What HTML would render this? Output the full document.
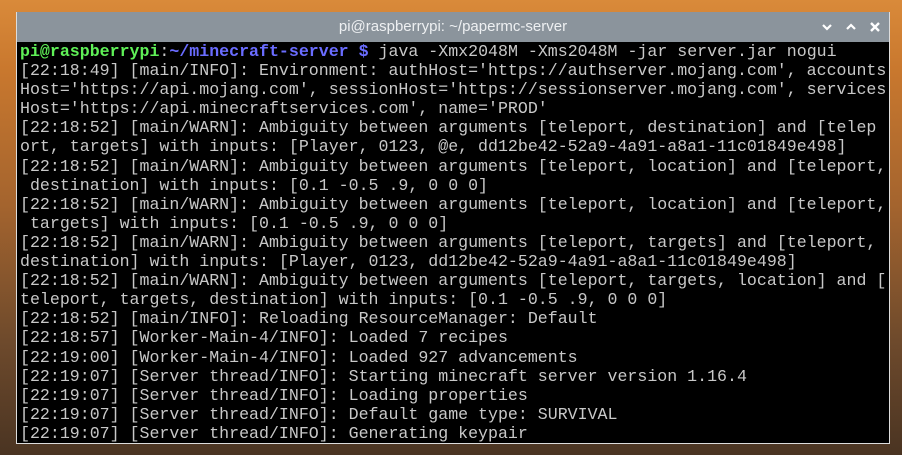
<!DOCTYPE html>
<html><head><meta charset="utf-8"><style>
html,body{margin:0;width:902px;height:455px;overflow:hidden}
body{background:linear-gradient(180deg,#d98a3a 0%,#c9782e 15%,#a4642e 45%,#6e4a2c 75%,#4a3422 100%);position:relative;font-family:"Liberation Sans",sans-serif}
.win{position:absolute;left:16px;top:12px;width:874px;height:432px;background:#000;border:1px solid #ddd;border-top:none;box-sizing:border-box}
.tb{position:absolute;left:0;top:0;width:100%;height:30px;background:#8b949c;color:#eef0f2;font-size:15px;text-align:center;line-height:30px}
.tb svg{position:absolute;top:9px}
pre{position:absolute;left:3px;top:30px;margin:0;font-family:"Liberation Mono",monospace;font-size:16.6px;line-height:19.1px;color:#c8c8c8;white-space:pre}
.g{color:#5ff057;font-weight:bold}.b{color:#6a6cff;font-weight:bold}
</style></head><body>
<div class="win">
<div class="tb">pi@raspberrypi: ~/papermc-server
<svg style="left:804px" width="12" height="12" viewBox="0 0 12 12"><path d="M2 4 L6 8 L10 4" stroke="#fff" stroke-width="2.2" fill="none"/></svg>
<svg style="left:828px" width="12" height="12" viewBox="0 0 12 12"><path d="M2 8 L6 4 L10 8" stroke="#fff" stroke-width="2.2" fill="none"/></svg>
<svg style="left:852px" width="12" height="12" viewBox="0 0 12 12"><path d="M2 2 L10 10 M10 2 L2 10" stroke="#fff" stroke-width="2.4" fill="none"/></svg></div>
<pre><span class="g">pi@raspberrypi</span>:<span class="b">~/minecraft-server $</span> java -Xmx2048M -Xms2048M -jar server.jar nogui
[22:18:49] [main/INFO]: Environment: authHost='https://authserver.mojang.com', accounts
Host='https://api.mojang.com', sessionHost='https://sessionserver.mojang.com', services
Host='https://api.minecraftservices.com', name='PROD'
[22:18:52] [main/WARN]: Ambiguity between arguments [teleport, destination] and [telep
ort, targets] with inputs: [Player, 0123, @e, dd12be42-52a9-4a91-a8a1-11c01849e498]
[22:18:52] [main/WARN]: Ambiguity between arguments [teleport, location] and [teleport,
 destination] with inputs: [0.1 -0.5 .9, 0 0 0]
[22:18:52] [main/WARN]: Ambiguity between arguments [teleport, location] and [teleport,
 targets] with inputs: [0.1 -0.5 .9, 0 0 0]
[22:18:52] [main/WARN]: Ambiguity between arguments [teleport, targets] and [teleport,
destination] with inputs: [Player, 0123, dd12be42-52a9-4a91-a8a1-11c01849e498]
[22:18:52] [main/WARN]: Ambiguity between arguments [teleport, targets, location] and [
teleport, targets, destination] with inputs: [0.1 -0.5 .9, 0 0 0]
[22:18:52] [main/INFO]: Reloading ResourceManager: Default
[22:18:57] [Worker-Main-4/INFO]: Loaded 7 recipes
[22:19:00] [Worker-Main-4/INFO]: Loaded 927 advancements
[22:19:07] [Server thread/INFO]: Starting minecraft server version 1.16.4
[22:19:07] [Server thread/INFO]: Loading properties
[22:19:07] [Server thread/INFO]: Default game type: SURVIVAL
[22:19:07] [Server thread/INFO]: Generating keypair</pre>
</div>
</body></html>
